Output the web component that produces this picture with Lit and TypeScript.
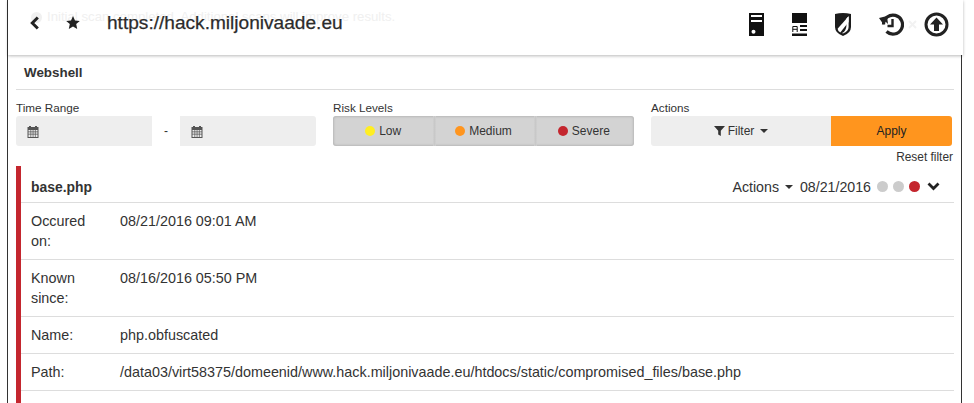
import { LitElement, html, css, svg } from "lit";
import { customElement } from "lit/decorators.js";

const cal = svg`<svg class="cal" width="12" height="13" viewBox="0 0 12 13"><path fill="#555" d="M.5 2H2V1h2v1h4V1h2v1h1.500v11H.5z"/><path fill="#eee" d="M1.500 5h2v1.500h-2zm2.700 0h1.500v1.500H4.200zm2.200 0h1.500v1.500H6.400zm2.200 0h1.900v1.500H8.600zM1.500 7.300h2v1.500h-2zm2.700 0h1.500v1.500H4.200zm2.200 0h1.500v1.500H6.400zm2.200 0h1.900v1.500H8.600zM1.500 9.600h2V12h-2zm2.700 0h1.500V12H4.200zm2.200 0h1.500V12H6.400zm2.200 0h1.900V12H8.600z"/></svg>`;

@customElement("app-root")
export class AppRoot extends LitElement {
  static styles = css`
    :host { display: block; width: 974px; height: 403px; overflow: hidden; position: relative; background: #fff;
      font-family: "Liberation Sans", Arial, sans-serif; font-size: 14.3px; color: #333; }
    .frame { margin-left: 7px; width: 955px; height: 403px; border-left: 1px solid #333; border-right: 1px solid #333; box-sizing: border-box; padding: 55px 0 0 8px; }
    .topbar { position: absolute; left: 8px; top: 0; width: 955px; height: 55px; background: #fff; box-shadow: 0 1px 3px rgba(0,0,0,.28);
      display: flex; align-items: center; box-sizing: border-box; padding: 0 0 10px 21px; z-index: 2; }
    .ghost { position: absolute; z-index: -1; left: 23px; top: 9px; display: flex; align-items: center; gap: 5px; font-size: 13.2px; line-height: 16px; color: #f0f0f0; white-space: nowrap; }
    .ghost i { width: 11px; height: 11px; border-radius: 50%; background: #f0f0f0; display: block; }
    .ghost-x { position: absolute; z-index: -1; left: 900px; top: 20px; display: block; }
    .back { width: 11px; display: flex; }
    .star { margin-left: 26px; display: flex; }
    .url { margin-left: 27px; font-size: 19.1px; font-weight: 400; color: #2b2b2b; -webkit-text-stroke: .25px #2b2b2b; }
    .icons { margin-left: auto; display: flex; align-items: center; padding-top: 4px; margin-right: 14px; }
    .icons svg { display: block; }
    .title { width: 938px; height: 35px; line-height: 35px; box-sizing: border-box; padding-left: 8px; border-bottom: 1px solid #ddd; font-weight: 700; font-size: 13.4px; color: #333; }
    .filters { display: flex; width: 938px; margin-top: 11px; }
    .label { font-size: 11.7px; line-height: 13px; height: 15px; color: #333; }
    .time { width: 300px; }
    .range { display: flex; align-items: center; }
    .date { background: #eee; height: 30px; display: flex; align-items: center; padding-left: 11px; box-sizing: border-box; border-radius: 3px 0 0 3px; }
    .d1 { width: 136px; }
    .d2 { width: 136px; border-radius: 0 3px 3px 0; }
    .dash { width: 28px; text-align: center; font-size: 12px; }
    .risk { width: 301px; margin-left: 17px; }
    .seg { display: flex; height: 30px; background: #d3d3d3; border-radius: 3px; box-shadow: inset 0 0 3px rgba(0,0,0,.25); box-sizing: border-box; overflow: hidden; }
    .seg div { flex: 1; display: flex; align-items: center; justify-content: center; gap: 4px; font-size: 12px; }
    .seg div + div { background: linear-gradient(90deg, #d3d3d3 0, #c8c8c8 1px, #c8c8c8 2px, #d3d3d3 3px) no-repeat left / 3px 100%; }
    .dot { width: 10px; height: 10px; border-radius: 50%; display: inline-block; }
    .act { width: 301px; margin-left: 17px; }
    .btns { display: flex; height: 30px; }
    .filter { width: 180px; background: #eee; display: flex; align-items: center; justify-content: center; gap: 3px; font-size: 12px; border-radius: 3px 0 0 3px; }
    .apply { width: 121px; background: #ff951e; border-radius: 0 3px 3px 0; display: flex; align-items: center; justify-content: center; font-size: 12px; color: #222; }
    .caret { width: 0; height: 0; border-left: 4px solid transparent; border-right: 4px solid transparent; border-top: 4px solid #333; display: inline-block; }
    .reset { width: 937px; text-align: right; font-size: 11.9px; line-height: 15px; height: 15px; margin-top: 4px; color: #333; }
    .card { width: 938px; margin-top: 1px; border-left: 5px solid #c4262e; box-sizing: border-box; height: 300px; }
    .chead { height: 37px; border-bottom: 1px solid #ddd; display: flex; align-items: center; box-sizing: border-box; padding: 5px 14px 0 10px; }
    .chead b { font-size: 13.9px; color: #333; }
    .meta { margin-left: auto; display: flex; align-items: center; font-size: 14.2px; color: #333; }
    .meta .caret { margin: 0 7px 0 6px; }
    .meta .d { width: 11px; height: 11px; border-radius: 50%; background: #ccc; margin-left: 5px; }
    .meta .d.first { margin-left: 6px; }
    .meta svg { margin-left: 7px; }
    .row { display: flex; border-bottom: 1px solid #ddd; box-sizing: border-box; padding: 8px 0 0 10px; line-height: 20px; font-size: 14.36px; }
    .row .k { width: 89px; flex: none; padding-right: 20px; box-sizing: border-box; }
    .tall { height: 57px; }
    .short { height: 37px; }
  `;

  render() {
    return html`
      <div class="topbar">
        <div class="ghost"><i></i>Initial scan completed. Additional scans will improve results.</div>
        <svg class="ghost-x" width="9" height="9" viewBox="0 0 9 9"><path d="M1 1l7 7M8 1 1 8" stroke="#f2f2f2" stroke-width="2"/></svg>
        <span class="back"><svg width="11" height="14" viewBox="0 0 11 14"><path d="M8.800 1.500 3.300 7l5.500 5.500" fill="none" stroke="#222" stroke-width="3"/></svg></span>
        <span class="star"><svg width="14" height="13" viewBox="0 0 14 13"><path fill="#222" d="M7 0l2 4.400 4.800.5-3.600 3.200 1 4.800L7 10.400 2.800 12.900l1-4.800L.2 4.900 5 4.400z"/></svg></span>
        <span class="url">https://hack.miljonivaade.eu</span>
        <div class="icons">
          <svg width="15" height="23" viewBox="0 0 15 23"><path fill="#111" d="M0 0h15v23H0z"/><path fill="#fff" d="M2 2h11v2H2zM2 7h11v2H2z"/><circle cx="4.500" cy="18.700" r="2" fill="#fff"/></svg>
          <svg style="margin-left:28px" width="15" height="23" viewBox="0 0 15 23"><path fill="#111" d="M0 0h15v10H0zM8 12h7v2H8zM8 16h7v2H8zM0 20.500h15V23H0z"/><path fill="none" stroke="#111" d="M.8 19v-5.500h4.400V19M.8 16.300h4.400"/></svg>
          <svg style="margin-left:28px" width="16" height="23" viewBox="0 0 16 23"><path fill="#1c1c1c" d="M0 1q8-2 16 0v13q0 6-8 9-8-3-8-9z"/><path fill="#fff" d="M13.600 3.300v10.700q0 4.400-5.600 6.500l-.9-.4q4-2 4.300-7.100V5.500z"/><path fill="#fff" d="M13.600 3.200 2.600 15.800q.5 3 2.700 3.800L13.600 9z"/></svg>
          <svg style="margin-left:28px" width="25" height="25" viewBox="0 0 25 25"><path d="M4.500 12.500a9.500 9.500 0 1 1 3 7" fill="none" stroke="#222" stroke-width="3.200"/><path fill="#222" d="M0 6l8-2 1 8-2.500-2.500-2 3z"/><path d="M13.500 7v7H8.500" fill="none" stroke="#222" stroke-width="2.400"/></svg>
          <svg style="margin-left:20px" width="25" height="25" viewBox="0 0 25 25"><circle cx="12.500" cy="12.500" r="10.500" fill="none" stroke="#222" stroke-width="3"/><path fill="#222" d="M12.500 5.500l6.500 7h-4v6.500h-5v-6.500H6z"/></svg>
        </div>
      </div>
      <div class="frame">
        <div class="title">Webshell</div>
        <div class="filters">
          <div class="time">
            <div class="label">Time Range</div>
            <div class="range">
              <div class="date d1">${cal}</div><div class="dash">-</div><div class="date d2">${cal}</div>
            </div>
          </div>
          <div class="risk">
            <div class="label">Risk Levels</div>
            <div class="seg">
              <div><span class="dot" style="background:#ffee22"></span>Low</div>
              <div><span class="dot" style="background:#ff951e"></span>Medium</div>
              <div><span class="dot" style="background:#c4262e"></span>Severe</div>
            </div>
          </div>
          <div class="act">
            <div class="label">Actions</div>
            <div class="btns">
              <div class="filter"><svg width="11" height="10" viewBox="0 0 11 10"><path fill="#333" d="M0 0h11L6.800 4.800V10L4.200 8.500V4.800z"/></svg>Filter <span class="caret" style="margin-left:3px"></span></div>
              <div class="apply">Apply</div>
            </div>
          </div>
        </div>
        <div class="reset">Reset filter</div>
        <div class="card">
          <div class="chead">
            <b>base.php</b>
            <div class="meta">Actions<span class="caret"></span>08/21/2016
              <span class="d first"></span><span class="d"></span><span class="d" style="background:#c4262e"></span>
              <svg width="13" height="9" viewBox="0 0 13 9"><path d="M1.500 1.500l5 5 5-5" fill="none" stroke="#222" stroke-width="2.800"/></svg>
            </div>
          </div>
          <div class="row tall"><div class="k">Occured on:</div><div>08/21/2016 09:01 AM</div></div>
          <div class="row tall"><div class="k">Known since:</div><div>08/16/2016 05:50 PM</div></div>
          <div class="row short"><div class="k">Name:</div><div>php.obfuscated</div></div>
          <div class="row short"><div class="k">Path:</div><div>/data03/virt58375/domeenid/www.hack.miljonivaade.eu/htdocs/static/compromised_files/base.php</div></div>
        </div>
      </div>
    `;
  }
}
